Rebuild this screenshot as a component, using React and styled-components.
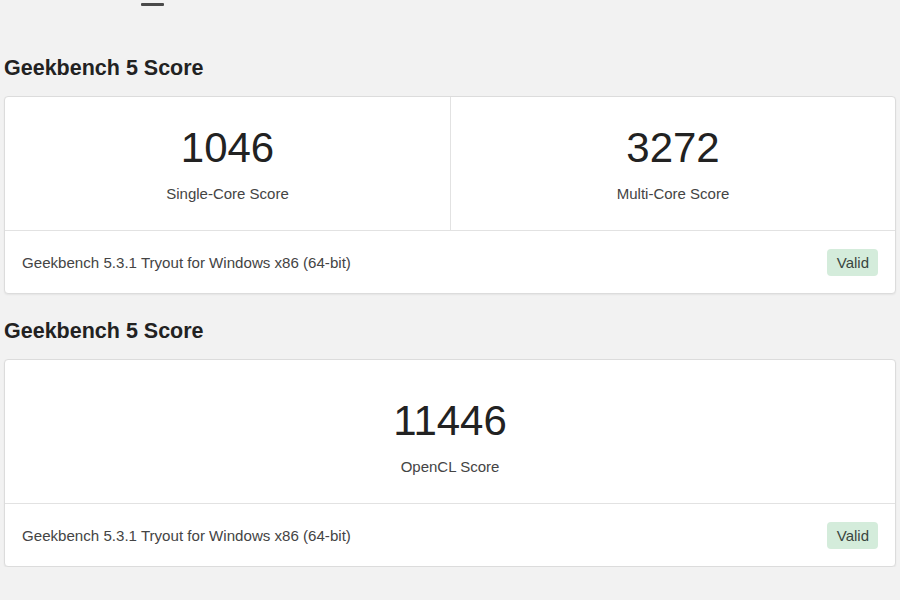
import styled, { createGlobalStyle } from "styled-components";

const GlobalStyle = createGlobalStyle`
  body {
    margin: 0;
    background: #f2f2f2;
    font-family: "Liberation Sans", Arial, sans-serif;
    color: #222;
  }
`;

const Page = styled.main`
  padding: 3px 4px 0 4px;
`;

// the tail of a line that is cut off at the top of the shot
const CutOff = styled.div`
  width: 23px;
  height: 3px;
  margin-left: 137px;
  background: #4a4a4a;
  border-radius: 1px;
`;

const Heading = styled.h2`
  margin: ${(p) => p.$top}px 0 16px 0;
  font-size: 21.5px;
  line-height: 24px;
  font-weight: 700;
  color: #222;
`;

const Card = styled.section`
  background: #fff;
  border: 1px solid #dcdcdc;
  border-radius: 4px;
  box-shadow: 0 1px 2px rgba(0, 0, 0, 0.06);
`;

const Scores = styled.div`
  display: grid;
  grid-template-columns: repeat(${(p) => p.$cols}, 1fr);
`;

const ScoreCell = styled.div`
  display: flex;
  flex-direction: column;
  align-items: center;
  padding: ${(p) => p.$top}px 0 26px 0;

  & + & {
    border-left: 1px solid #e2e2e2;
  }
`;

const Number = styled.div`
  font-size: 42px;
  line-height: 48px;
  color: #222;
`;

const Label = styled.div`
  margin-top: 12px;
  font-size: 15px;
  line-height: 20px;
  color: #444;
`;

const Footer = styled.div`
  display: flex;
  align-items: center;
  justify-content: space-between;
  height: 62px;
  padding: 0 17px 0 17px;
  border-top: 1px solid #e2e2e2;
`;

const Version = styled.span`
  font-size: 15.1px;
  color: #444;
`;

const Badge = styled.span`
  padding: 5px 9px 5px 10px;
  font-size: 15px;
  line-height: 17px;
  color: #3a4640;
  background: #d4ecdb;
  border-radius: 4px;
`;

const ScoreCard = ({ scores, top }) => (
  <Card>
    <Scores $cols={scores.length}>
      {scores.map((s) => (
        <ScoreCell key={s.label} $top={top}>
          <Number>{s.value}</Number>
          <Label>{s.label}</Label>
        </ScoreCell>
      ))}
    </Scores>
    <Footer>
      <Version>Geekbench 5.3.1 Tryout for Windows x86 (64-bit)</Version>
      <Badge>Valid</Badge>
    </Footer>
  </Card>
);

export default function App() {
  return (
    <>
      <GlobalStyle />
      <Page>
        <CutOff />
        <Heading $top={50}>Geekbench 5 Score</Heading>
        <ScoreCard
          top={27}
          scores={[
            { value: 1046, label: "Single-Core Score" },
            { value: 3272, label: "Multi-Core Score" },
          ]}
        />
        <Heading $top={25}>Geekbench 5 Score</Heading>
        <ScoreCard top={37} scores={[{ value: 11446, label: "OpenCL Score" }]} />
      </Page>
    </>
  );
}
